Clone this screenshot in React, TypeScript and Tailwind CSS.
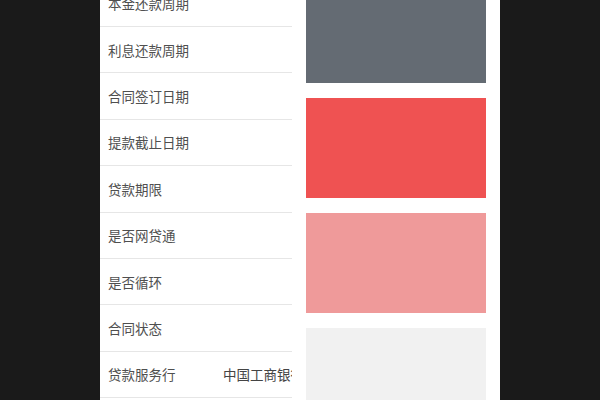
const rows: { label: string; value?: string }[] = [
  { label: "本金还款周期" },
  { label: "利息还款周期" },
  { label: "合同签订日期" },
  { label: "提款截止日期" },
  { label: "贷款期限" },
  { label: "是否网贷通" },
  { label: "是否循环" },
  { label: "合同状态" },
  { label: "贷款服务行", value: "中国工商银行" },
];

const swatches = ["bg-[#646b73]", "bg-[#ef5252]", "bg-[#ef9a9a]", "bg-[#f1f1f1]"];

export default function App() {
  return (
    <div
      className="flex h-[400px] w-[600px] justify-center overflow-hidden bg-[#1a1a1a]"
      style={{ fontFamily: '"Noto Sans CJK SC", "Noto Sans", sans-serif' }}
    >
      <div className="flex h-full w-[400px] overflow-hidden bg-white">
        <div className="-mt-[19.4px] flex w-[192px] shrink-0 flex-col">
          {rows.map((r) => (
            <div
              key={r.label}
              className="flex h-[46.4px] shrink-0 items-center overflow-hidden border-b border-[#e6e6e6] pl-2 text-[13.5px] text-[#4f4f4f]"
            >
              <span className="w-[115px] shrink-0 whitespace-nowrap">{r.label}</span>
              {r.value && <span className="whitespace-nowrap text-[#444]">{r.value}</span>}
            </div>
          ))}
        </div>
        <div className="-mt-[17px] ml-[14px] flex w-[180px] shrink-0 flex-col gap-[15px]">
          {swatches.map((c) => (
            <div key={c} className={`h-[100px] shrink-0 ${c}`} />
          ))}
        </div>
      </div>
    </div>
  );
}
